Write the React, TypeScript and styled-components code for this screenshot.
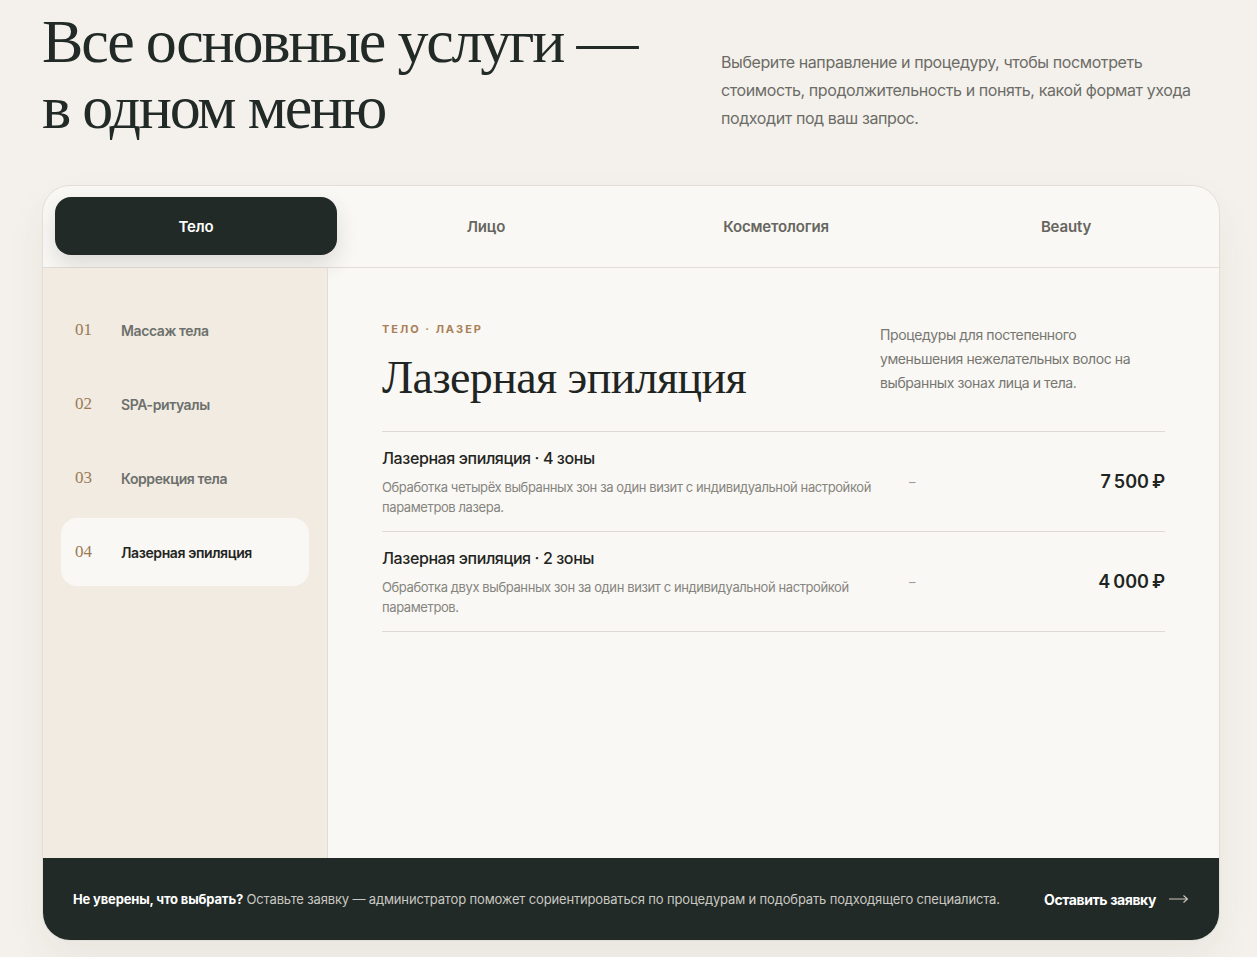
import { useState } from 'react';
import styled, { createGlobalStyle } from 'styled-components';

const DARK = '#222a27';
const SANS = `Inter, 'Noto Sans', 'Liberation Sans', sans-serif`;
const SERIF = `'Liberation Serif', 'DejaVu Serif', serif`;

const GlobalStyle = createGlobalStyle`
  html, body {
    margin: 0;
    padding: 0;
    background: #f4f1ec;
    font-family: ${SANS};
    letter-spacing: -0.025em;
    color: ${DARK};
  }
  * {
    box-sizing: border-box;
  }
`;

const TABS = ['Тело', 'Лицо', 'Косметология', 'Beauty'];

const CATEGORIES = [
  { num: '01', title: 'Массаж тела' },
  { num: '02', title: 'SPA-ритуалы' },
  { num: '03', title: 'Коррекция тела' },
  { num: '04', title: 'Лазерная эпиляция' },
];

const SERVICES = [
  {
    name: 'Лазерная эпиляция · 4 зоны',
    desc: 'Обработка четырёх выбранных зон за один визит с индивидуальной настройкой параметров лазера.',
    price: '7\u202f500\u202f₽',
  },
  {
    name: 'Лазерная эпиляция · 2 зоны',
    desc: 'Обработка двух выбранных зон за один визит с индивидуальной настройкой параметров.',
    price: '4\u202f000\u202f₽',
  },
];

export default function App() {
  const [tab, setTab] = useState(0);
  const [category, setCategory] = useState(3);

  return (
    <Page>
      <GlobalStyle />
      <Intro>
        <Heading>
          Все основные услуги —
          <br />в одном меню
        </Heading>
        <Lead>
          Выберите направление и процедуру, чтобы посмотреть стоимость, продолжительность и понять,
          какой формат ухода подходит под ваш запрос.
        </Lead>
      </Intro>

      <Card>
        <TabBar>
          {TABS.map((t, i) => (
            <Tab key={t} $active={i === tab} onClick={() => setTab(i)}>
              {t}
            </Tab>
          ))}
        </TabBar>

        <Body>
          <Sidebar>
            {CATEGORIES.map((c, i) => (
              <CategoryItem key={c.num} $active={i === category} onClick={() => setCategory(i)}>
                <CategoryNum>{c.num}</CategoryNum>
                <CategoryTitle $active={i === category}>{c.title}</CategoryTitle>
              </CategoryItem>
            ))}
          </Sidebar>

          <Content>
            <ContentHeader>
              <div>
                <Eyebrow>Тело · Лазер</Eyebrow>
                <Title>Лазерная эпиляция</Title>
              </div>
              <Summary>
                Процедуры для постепенного уменьшения нежелательных волос на выбранных зонах лица и
                тела.
              </Summary>
            </ContentHeader>

            <ServiceList>
              {SERVICES.map((s) => (
                <ServiceRow key={s.name}>
                  <div>
                    <ServiceName>{s.name}</ServiceName>
                    <ServiceDesc>{s.desc}</ServiceDesc>
                  </div>
                  <Duration>–</Duration>
                  <Price>{s.price}</Price>
                </ServiceRow>
              ))}
            </ServiceList>
          </Content>
        </Body>

        <Footer>
          <FooterText>
            <strong>Не уверены, что выбрать?</strong> Оставьте заявку — администратор поможет
            сориентироваться по процедурам и подобрать подходящего специалиста.
          </FooterText>
          <FooterLink href="#">
            Оставить заявку
            <svg width="20" height="10" viewBox="0 0 20 10" fill="none">
              <path d="M0 5h18.5M14.5 1.5L18.5 5l-4 3.5" stroke="#cfc8bc" strokeWidth="1.1" />
            </svg>
          </FooterLink>
        </Footer>
      </Card>
    </Page>
  );
}

const Page = styled.div`
  padding: 8px 37px 16px 42px;
`;

const Intro = styled.header`
  display: flex;
  justify-content: space-between;
  align-items: flex-start;
  margin-bottom: 45px;
`;

const Heading = styled.h1`
  margin: 0;
  font-family: ${SERIF};
  font-weight: 400;
  font-size: 62px;
  line-height: 66px;
  letter-spacing: -2.2px;
  color: ${DARK};
`;

const Lead = styled.p`
  width: 499px;
  margin: 40px 0 0;
  font-size: 16px;
  line-height: 28px;
  color: #6c6c67;
`;

const Card = styled.section`
  background: #faf8f4;
  border: 1px solid #e2ded7;
  border-radius: 28px;
  overflow: hidden;
  box-shadow: 0 18px 40px rgba(60, 50, 35, 0.06);
`;

const TabBar = styled.nav`
  display: grid;
  grid-template-columns: repeat(4, 1fr);
  gap: 8px;
  padding: 11px 12px 12px;
  border-bottom: 1px solid #e2ded7;
`;

const Tab = styled.button<{ $active?: boolean }>`
  height: 58px;
  border: none;
  border-radius: 16px;
  font-family: ${SANS};
  font-size: 15px;
  font-weight: 600;
  letter-spacing: -0.01em;
  cursor: pointer;
  background: ${(p) => (p.$active ? DARK : 'transparent')};
  color: ${(p) => (p.$active ? '#ffffff' : '#66665f')};
  box-shadow: ${(p) => (p.$active ? '0 10px 22px rgba(34, 42, 39, 0.14)' : 'none')};
`;

const Body = styled.div`
  display: grid;
  grid-template-columns: 285px 1fr;
  min-height: 590px;
`;

const Sidebar = styled.aside`
  background: #f1ebe2;
  border-right: 1px solid #e2ddd5;
  padding: 28px 18px;
  display: flex;
  flex-direction: column;
  gap: 6px;
`;

const CategoryItem = styled.div<{ $active?: boolean }>`
  display: flex;
  align-items: center;
  gap: 26px;
  height: 68px;
  padding: 0 14px;
  border-radius: 16px;
  cursor: pointer;
  background: ${(p) => (p.$active ? '#faf8f4' : 'transparent')};
`;

const CategoryNum = styled.span`
  width: 20px;
  font-family: ${SERIF};
  font-size: 17px;
  letter-spacing: 0;
  color: #9b7a55;
`;

const CategoryTitle = styled.span<{ $active?: boolean }>`
  font-size: 14px;
  font-weight: 600;
  color: ${(p) => (p.$active ? '#1f2522' : '#6d706c')};
`;

const Content = styled.div`
  padding: 54px 54px 40px;
`;

const ContentHeader = styled.div`
  display: flex;
  justify-content: space-between;
  align-items: flex-start;
  padding-bottom: 29px;
  border-bottom: 1px solid #dfdbd4;
`;

const Eyebrow = styled.div`
  font-size: 11px;
  line-height: 14px;
  font-weight: 700;
  letter-spacing: 2px;
  text-transform: uppercase;
  color: #a98058;
`;

const Title = styled.h2`
  margin: 18px 0 0;
  font-family: ${SERIF};
  font-weight: 400;
  font-size: 46px;
  line-height: 48px;
  letter-spacing: -0.6px;
  color: #1f2522;
`;

const Summary = styled.p`
  width: 285px;
  padding-right: 24px;
  margin: 1px 0 0;
  font-size: 14px;
  line-height: 24px;
  color: #777772;
`;

const ServiceList = styled.div`
  display: flex;
  flex-direction: column;
`;

const ServiceRow = styled.div`
  display: grid;
  grid-template-columns: 500px auto 1fr;
  column-gap: 27px;
  align-items: center;
  padding: 14px 0;
  border-bottom: 1px solid #dfdbd4;
`;

const ServiceName = styled.div`
  font-size: 16px;
  line-height: 24px;
  font-weight: 500;
  color: #1f2522;
`;

const ServiceDesc = styled.p`
  margin: 7px 0 0;
  font-size: 13px;
  line-height: 20px;
  color: #858580;
`;

const Duration = styled.span`
  font-size: 13px;
  color: #9d9d97;
`;

const Price = styled.span`
  justify-self: end;
  font-size: 18px;
  font-weight: 600;
  letter-spacing: 0;
  color: #1f2522;
`;

const Footer = styled.footer`
  display: flex;
  align-items: center;
  justify-content: space-between;
  height: 82px;
  padding: 0 30px;
  background: ${DARK};
`;

const FooterText = styled.p`
  margin: 0;
  font-size: 13px;
  letter-spacing: -0.012em;
  color: #c9c8c2;

  strong {
    color: #ffffff;
    font-weight: 700;
  }
`;

const FooterLink = styled.a`
  display: flex;
  align-items: center;
  gap: 13px;
  font-size: 14px;
  font-weight: 700;
  color: #ffffff;
  text-decoration: none;
`;
